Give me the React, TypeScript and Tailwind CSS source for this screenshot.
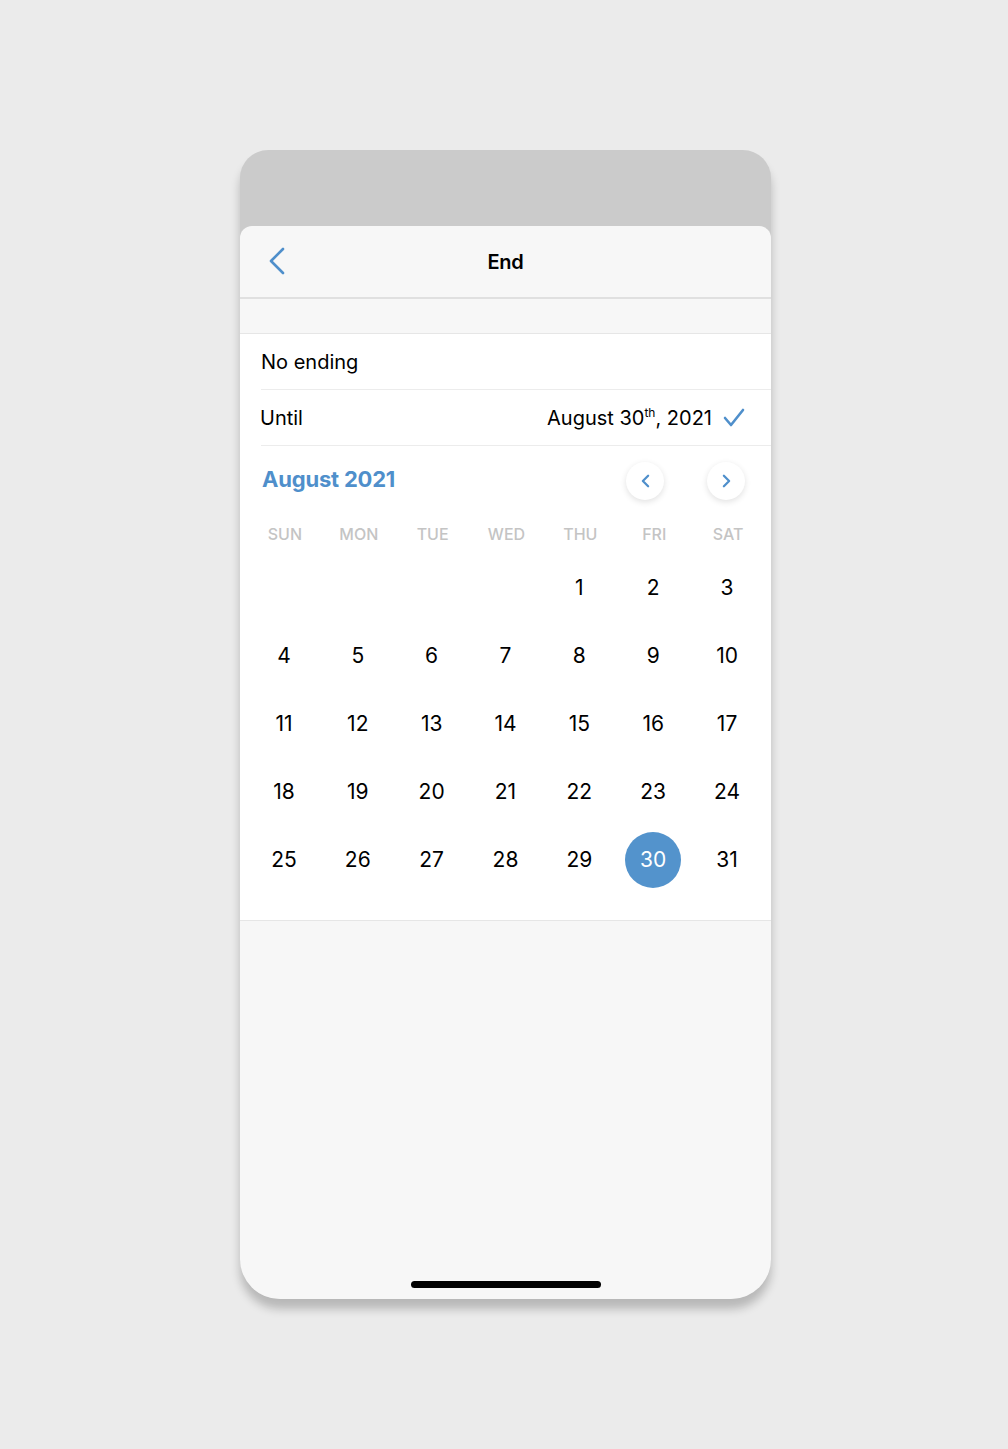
import React from 'react';

const days: (number | null)[] = [
  null, null, null, null, 1, 2, 3,
  ...Array.from({ length: 28 }, (_, i) => i + 4),
];
const weekdays = ['SUN', 'MON', 'TUE', 'WED', 'THU', 'FRI', 'SAT'];

const Chevron = ({ dir, className }: { dir: 'left' | 'right'; className?: string }) => (
  <svg viewBox="0 0 10 16" className={className} fill="none" stroke="currentColor" strokeWidth={2.6} strokeLinecap="round" strokeLinejoin="round">
    {dir === 'left' ? <polyline points="8,2 2,8 8,14" /> : <polyline points="2,2 8,8 2,14" />}
  </svg>
);

export default function App() {
  const rows: (number | null)[][] = [];
  for (let i = 0; i < days.length; i += 7) rows.push(days.slice(i, i + 7));

  return (
    <div className="min-h-screen bg-[#ebebeb] pt-[150px] pl-[240px] flex font-['Inter',sans-serif] text-black">
      <div className="w-[531px] h-[1149px] rounded-t-[28px] rounded-b-[40px] bg-[#cbcbcb] shadow-[0_10px_10px_rgba(0,0,0,0.22)] overflow-hidden flex flex-col">
        <div className="h-[76px] shrink-0" />
        <div className="flex-1 bg-[#f7f7f7] rounded-t-[12px] flex flex-col">
          {/* header */}
          <div className="h-[73px] relative flex items-center justify-center border-b-2 border-[#e0e0e0]">
            <button className="absolute left-[28px] top-[21px] text-[#4f8fcb]">
              <svg width="18" height="28" viewBox="0 0 18 28" fill="none" stroke="currentColor" strokeWidth={2.6} strokeLinecap="round" strokeLinejoin="round">
                <polyline points="15,2 3,14 15,26" />
              </svg>
            </button>
            <span className="text-[20px] font-semibold tracking-[-0.2px]">End</span>
          </div>

          <div className="h-[35px] border-b border-[#e6e6e6]" />

          {/* options + calendar */}
          <div className="bg-white border-b border-[#e6e6e6]">
            <div className="h-[55px] flex items-center pl-[21px] text-[20px]">No ending</div>
            <div className="ml-[21px] h-px bg-[#ececec]" />
            <div className="h-[55px] flex items-center justify-between pl-[20px] pr-[26px] text-[20px]">
              <span>Until</span>
              <span className="flex items-center gap-[11px]">
                <span>
                  August 30<sup className="text-[12px] relative -top-[8px]">th</sup>, 2021
                </span>
                <svg width="22" height="19" viewBox="0 0 22 19" fill="none" stroke="#4f8fcb" strokeWidth={2.6} strokeLinecap="round" strokeLinejoin="round">
                  <polyline points="2,10 8,17 20,2" />
                </svg>
              </span>
            </div>
            <div className="ml-[21px] h-px bg-[#ececec]" />

            {/* calendar */}
            <div className="px-[7px] pt-[16px] pb-[26px]">
              <div className="h-[38px] flex items-center justify-between pl-[15px] pr-[19px]">
                <span className="text-[22px] font-bold text-[#4f8fcb] tracking-[-0.2px] -mt-[4px]">August 2021</span>
                <div className="flex gap-[43px]">
                  <button className="w-[38px] h-[38px] rounded-full bg-white shadow-[0_2px_6px_rgba(0,0,0,0.12)] flex items-center justify-center text-[#4f8fcb]">
                    <Chevron dir="left" className="w-[9px] h-[14px]" />
                  </button>
                  <button className="w-[38px] h-[38px] rounded-full bg-white shadow-[0_2px_6px_rgba(0,0,0,0.12)] flex items-center justify-center text-[#4f8fcb]">
                    <Chevron dir="right" className="w-[9px] h-[14px]" />
                  </button>
                </div>
              </div>
              <div className="grid grid-cols-7 mt-[22px] h-[20px]">
                {weekdays.map((w) => (
                  <div key={w} className="flex items-center justify-center text-[16px] font-medium text-[#c4c4c4] pl-[2px]">
                    {w}
                  </div>
                ))}
              </div>
              <div className="mt-[12px]">
                {rows.map((row, ri) => (
                  <div key={ri} className="grid grid-cols-7 h-[68px]">
                    {row.map((d, di) => (
                      <div key={di} className="flex items-center justify-center">
                        {d === 30 ? (
                          <span className="w-[56px] h-[56px] rounded-full bg-[#5393cc] text-white text-[21px] flex items-center justify-center">
                            30
                          </span>
                        ) : (
                          <span className="text-[21px]">{d ?? ''}</span>
                        )}
                      </div>
                    ))}
                  </div>
                ))}
              </div>
            </div>
          </div>

          <div className="flex-1" />
          <div className="flex justify-center pb-[11px]">
            <div className="w-[190px] h-[7px] rounded-full bg-black" />
          </div>
        </div>
      </div>
    </div>
  );
}
